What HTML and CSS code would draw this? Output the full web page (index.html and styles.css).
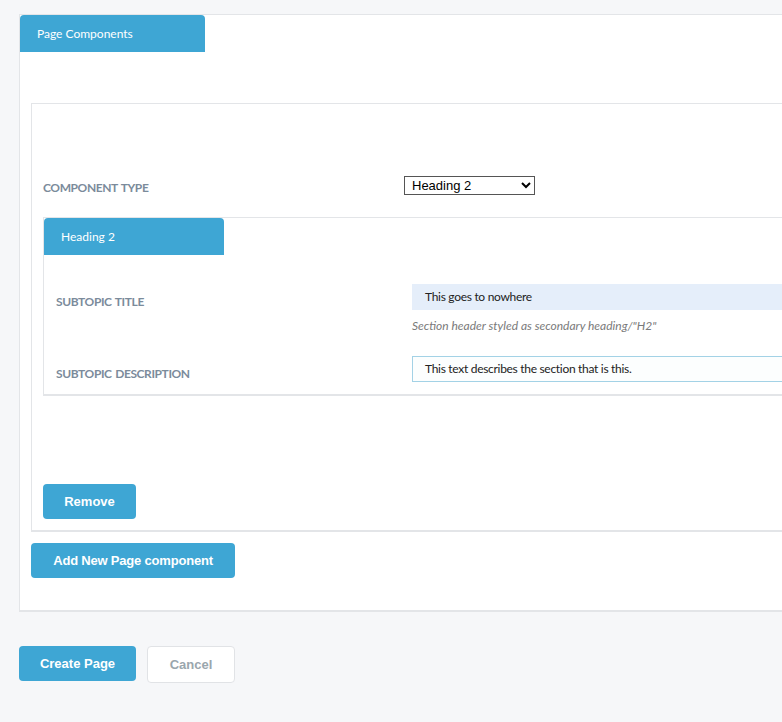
FILE: index.html
```html
<!DOCTYPE html>
<html lang="en">
<head>
<meta charset="utf-8">
<title>Page Components</title>
<link rel="stylesheet" href="styles.css">
</head>
<body>
<div class="page">
  <section class="panel outer">
    <div class="tab outer-tab">Page Components</div>
    <div class="outer-body">
      <div class="panel component">
        <div class="row type-row">
          <label class="label type-label" for="ctype">Component Type</label>
          <select id="ctype" class="select">
            <option>Heading 2</option>
          </select>
        </div>
        <div class="panel nested">
          <div class="tab nested-tab">Heading 2</div>
          <div class="nested-body">
            <div class="row field-row">
              <label class="label field-label">Subtopic Title</label>
              <div class="field">
                <div class="input filled">This goes to nowhere</div>
                <div class="help">Section header styled as secondary heading/"H2"</div>
              </div>
            </div>
            <div class="row field-row desc-row">
              <label class="label field-label">Subtopic Description</label>
              <div class="field">
                <div class="input focused">This text describes the section that is this.</div>
              </div>
            </div>
          </div>
        </div>
        <button class="btn primary remove">Remove</button>
      </div>
      <button class="btn primary add">Add New Page component</button>
    </div>
  </section>
  <div class="actions">
    <button class="btn primary create">Create Page</button>
    <button class="btn secondary cancel">Cancel</button>
  </div>
</div>
</body>
</html>
```

FILE: styles.css
```css
html, body {
  margin: 0;
  padding: 0;
  overflow: hidden;
  background: #f6f7f9;
  font-family: "Source Sans Pro", Lato, "Open Sans", sans-serif;
}

.page {
  padding: 14px 0 0 19px;
  width: 840px;
}

.panel {
  background: #fff;
  border: 1px solid #e3e5e8;
  border-bottom-width: 2px;
}

.tab {
  background: #3ea6d4;
  color: #fff;
  font-size: 12px;
  height: 37px;
  line-height: 37px;
  border-radius: 4px 4px 0 0;
  box-sizing: border-box;
}

.outer-tab {
  width: 185px;
  padding-left: 17px;
}

.outer-body {
  padding: 51px 0 32px 11px;
}

.component {
  padding: 0 0 11px 11px;
}

.row {
  display: flex;
  align-items: center;
}

.label {
  color: #7b8b9b;
  font-size: 12px;
  font-weight: 700;
  text-transform: uppercase;
  letter-spacing: -0.4px;
  word-spacing: 1px;
}

.type-row {
  padding-top: 73px;
  height: 18px;
  margin-bottom: 22px;
}

.type-label {
  width: 361px;
  padding-top: 2px;
}

.select {
  width: 131px;
  height: 19px;
  font-family: "Liberation Sans", Arial, sans-serif;
  font-size: 13px;
  border: 1px solid #555;
  border-radius: 0;
  padding: 0 0 0 3px;
  background: #fff;
  color: #000;
  margin-top: -2px;
}

.nested {
  border-right: none;
}

.nested-tab {
  width: 180px;
  padding-left: 17px;
}

.nested-body {
  padding: 29px 0 0 12px;
}

.field-row {
  align-items: flex-start;
}

.field-label {
  width: 356px;
  padding-top: 10px;
}

.field {
  flex: 1;
}

.input {
  box-sizing: border-box;
  height: 26px;
  line-height: 24px;
  font-size: 12px;
  letter-spacing: -0.3px;
  color: #222;
  padding-left: 12px;
  border: 1px solid transparent;
}

.filled {
  background: #e5eefa;
  border-color: #e5eefa;
}

.focused {
  background: #fcfefe;
  border-color: #a3d2e6;
}

.help {
  font-size: 12px;
  font-style: italic;
  color: #7a7a7a;
  margin-top: 8px;
  line-height: 16px;
}

.desc-row {
  margin-top: 22px;
  padding-bottom: 12px;
}

.btn {
  font-family: "Liberation Sans", Arial, sans-serif;
  font-size: 13px;
  font-weight: 700;
  border-radius: 4px;
  cursor: pointer;
  display: block;
}

.primary {
  background: #3ea6d4;
  color: #fff;
  border: none;
  height: 35px;
}

.remove {
  width: 93px;
  margin-top: 88px;
}

.add {
  width: 204px;
  margin-top: 11px;
  letter-spacing: -0.2px;
}

.actions {
  display: flex;
  gap: 11px;
  margin-top: 34px;
}

.create {
  width: 117px;
}

.secondary {
  background: #fff;
  color: #9aa6ad;
  border: 1px solid #e1e3e6;
  width: 88px;
  height: 37px;
}
```
